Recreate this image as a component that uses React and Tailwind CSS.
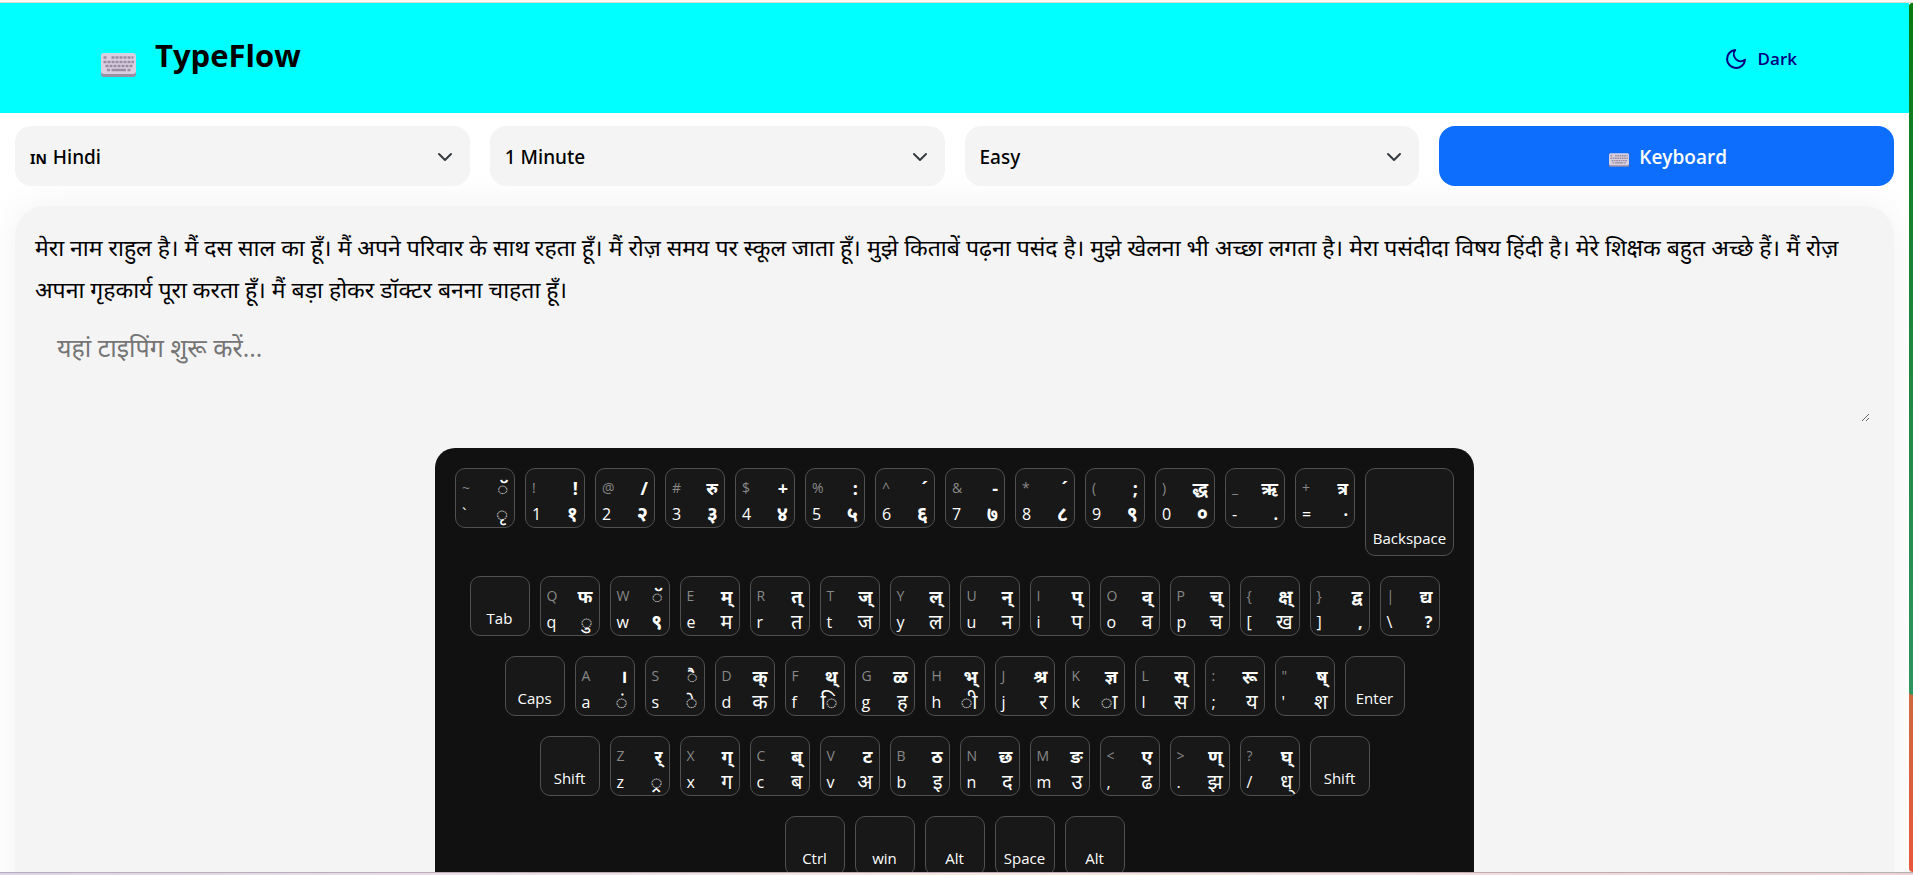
import { useState } from 'react';

const ROWS = [
  [
    ['~', '`', 'ॅ', 'ृ'],
    ['!', '1', '!', '१'],
    ['@', '2', '/', '२'],
    ['#', '3', 'रु', '३'],
    ['$', '4', '+', '४'],
    ['%', '5', ':', '५'],
    ['^', '6', '´', '६'],
    ['&', '7', '-', '७'],
    ['*', '8', '´', '८'],
    ['(', '9', ';', '९'],
    [')', '0', 'द्ध', '०'],
    ['_', '-', 'ऋ', '.'],
    ['+', '=', 'त्र', '·'],
    'Backspace',
  ],
  [
    'Tab',
    ['Q', 'q', 'फ', 'ु'],
    ['W', 'w', 'ॅ', '९'],
    ['E', 'e', 'म्', 'म'],
    ['R', 'r', 'त्', 'त'],
    ['T', 't', 'ज्', 'ज'],
    ['Y', 'y', 'ल्', 'ल'],
    ['U', 'u', 'न्', 'न'],
    ['I', 'i', 'प्', 'प'],
    ['O', 'o', 'व्', 'व'],
    ['P', 'p', 'च्', 'च'],
    ['{', '[', 'क्ष्', 'ख'],
    ['}', ']', 'द्व', ','],
    ['|', '\\', 'द्य', '?'],
  ],
  [
    'Caps',
    ['A', 'a', '।', 'ं'],
    ['S', 's', 'ै', 'े'],
    ['D', 'd', 'क्', 'क'],
    ['F', 'f', 'थ्', 'ि'],
    ['G', 'g', 'ळ', 'ह'],
    ['H', 'h', 'भ्', 'ी'],
    ['J', 'j', 'श्र', 'र'],
    ['K', 'k', 'ज्ञ', 'ा'],
    ['L', 'l', 'स्', 'स'],
    [':', ';', 'रू', 'य'],
    ['"', "'", 'ष्', 'श'],
    'Enter',
  ],
  [
    'Shift',
    ['Z', 'z', 'र्', '्र'],
    ['X', 'x', 'ग्', 'ग'],
    ['C', 'c', 'ब्', 'ब'],
    ['V', 'v', 'ट', 'अ'],
    ['B', 'b', 'ठ', 'इ'],
    ['N', 'n', 'छ', 'द'],
    ['M', 'm', 'ङ', 'उ'],
    ['<', ',', 'ए', 'ढ'],
    ['>', '.', 'ण्', 'झ'],
    ['?', '/', 'घ्', 'ध्'],
    'Shift',
  ],
  ['Ctrl', 'win', 'Alt', 'Space', 'Alt'],
];

const PASSAGE =
  'मेरा नाम राहुल है। मैं दस साल का हूँ। मैं अपने परिवार के साथ रहता हूँ। मैं रोज़ समय पर स्कूल जाता हूँ। मुझे किताबें पढ़ना पसंद है। मुझे खेलना भी अच्छा लगता है। मेरा पसंदीदा विषय हिंदी है। मेरे शिक्षक बहुत अच्छे हैं। मैं रोज़ अपना गृहकार्य पूरा करता हूँ। मैं बड़ा होकर डॉक्टर बनना चाहता हूँ।';

function KeyboardIcon({ className }) {
  return (
    <svg viewBox="0 0 35 24" className={className} aria-hidden="true">
      <rect x="0" y="3" width="35" height="21" rx="3" fill="#998ea4" />
      <rect x="0" y="0" width="35" height="21" rx="3" fill="#d8d0e0" />
      <g stroke="#998ea4" strokeWidth="2.4" fill="none">
        <path d="M2.500 4.500h3M10.500 4.500h22" strokeDasharray="3 1" />
        <path d="M2.500 9h30.500" strokeDasharray="3 1" />
        <path d="M4.500 13h27" strokeDasharray="3 1" />
        <path d="M6 17h3M10.500 17h14.500M26.500 17h3" />
      </g>
    </svg>
  );
}

function Picker({ label, prefix, options }) {
  return (
    <div className="relative flex h-[60px] items-center gap-[6px] rounded-2xl bg-[#f4f4f4] pt-[2px] pl-[15px]">
      {prefix && <span className="pt-1 font-['Noto_Sans',sans-serif] text-sm font-bold">{prefix}</span>}
      <select
        aria-label={label}
        className="h-full min-w-0 flex-1 appearance-none bg-transparent font-['Noto_Sans',sans-serif] text-[19px] font-medium outline-none"
      >
        {options.map((option) => (
          <option key={option}>{option}</option>
        ))}
      </select>
      <svg
        viewBox="0 0 16 16"
        className="pointer-events-none absolute right-[17px] size-4"
        fill="none"
        stroke="#343a40"
        strokeWidth="2"
        strokeLinecap="round"
        strokeLinejoin="round"
      >
        <path d="m2 5 6 6 6-6" />
      </svg>
    </div>
  );
}

function Key({ value }) {
  // Special keys only have one label
  if (typeof value === 'string') {
    const size = value === 'Backspace' ? 'h-[88px] w-[89px]' : 'h-[60px] w-[60px]';
    return (
      <button className={`${size} flex items-end justify-center rounded-[10px] border border-[#505050] bg-[#181818] pb-[6px] text-[15px]`}>
        {value}
      </button>
    );
  }

  const [shift, normal, hindiShift, hindi] = value;
  const bold = /[०-९.,?·]/.test(hindi);
  return (
    <button className="grid h-[60px] w-[60px] grid-cols-2 grid-rows-2 rounded-[10px] border border-[#505050] bg-[#181818] px-[6px] pt-[6px]">
      <span className="text-left text-sm leading-[26px] text-[#888]">{shift}</span>
      <span className="text-right text-lg leading-[26px] font-bold">{hindiShift}</span>
      <span className="text-left text-base leading-[26px]">{normal}</span>
      <span className={`text-right leading-[26px] ${/[.,?·]/.test(hindi) ? 'text-base' : 'text-xl'} ${bold ? 'font-bold' : ''}`}>{hindi}</span>
    </button>
  );
}

export default function App() {
  const [typed, setTyped] = useState('');
  const [showKeyboard, setShowKeyboard] = useState(true);

  return (
    <div className="flex h-screen flex-col overflow-hidden bg-white font-['Open_Sans','Noto_Sans',sans-serif] text-black">
      <div className="h-[3px] shrink-0 border-b border-[#e3d9cf] bg-[#fdf9f4]" />

      <div className="flex min-h-0 flex-1">
        <div className="min-w-0 flex-1 overflow-hidden">
          <header className="flex h-[110px] items-center justify-between bg-[#00ffff] pr-[112px] pl-[101px]">
            <div className="flex items-center gap-[19px]">
              <KeyboardIcon className="mt-[14px] h-6 w-[35px]" />
              <h1 className="pb-[6px] text-[31px] leading-10 font-bold">TypeFlow</h1>
            </div>
            <button className="flex items-center gap-[10px] pt-[2px] text-[17px] font-semibold text-[#000080]">
              <svg viewBox="0 0 24 24" className="size-6" fill="none" stroke="currentColor" strokeWidth="2" strokeLinecap="round" strokeLinejoin="round">
                <path d="M21 12.79A9 9 0 1 1 11.21 3 7 7 0 0 0 21 12.79z" />
              </svg>
              Dark
            </button>
          </header>

          <main className="px-[15px] pt-[13px]">
            <div className="grid grid-cols-4 gap-5">
              <Picker label="Language" prefix="IN" options={['Hindi', 'English']} />
              <Picker label="Duration" options={['1 Minute', '2 Minutes', '5 Minutes']} />
              <Picker label="Difficulty" options={['Easy', 'Medium', 'Hard']} />
              <button
                className="flex h-[60px] items-center justify-center gap-[10px] rounded-2xl bg-[#0d6efd] pt-[2px] pl-[3px] text-[19px] font-semibold text-white"
                onClick={() => setShowKeyboard(!showKeyboard)}
              >
                <KeyboardIcon className="mt-[5px] h-[14px] w-5" />
                Keyboard
              </button>
            </div>

            {/* Typing area */}
            <section className="mt-5 rounded-[30px] bg-[#f4f4f4] px-5 pt-5 pb-10 shadow-[0_0_40px_rgba(0,0,0,0.06)]">
              <p className="text-[23px] leading-[42px]">{PASSAGE}</p>
              <div className="px-1">
                <textarea
                  aria-label="Typing area"
                  placeholder="यहां टाइपिंग शुरू करें..."
                  className="block h-28 w-full resize-y bg-transparent px-[18px] pt-[17px] text-[25px] leading-10 outline-none placeholder:text-[#757575]"
                  value={typed}
                  onChange={(e) => setTyped(e.target.value)}
                />
              </div>

              {showKeyboard && (
                <div className="mx-auto mt-[26px] flex w-fit flex-col gap-5 rounded-[20px] bg-[#111] p-5 text-white">
                  {ROWS.map((row, i) => (
                    <div key={i} className="flex items-start justify-center gap-[10px]">
                      {row.map((value, j) => (
                        <Key key={j} value={value} />
                      ))}
                    </div>
                  ))}
                </div>
              )}
            </section>
          </main>
        </div>

        {/* Scroll progress */}
        <div className="flex w-1 shrink-0 flex-col overflow-hidden rounded-l bg-linear-to-b from-[#3c8c50] to-[#e8553a]">
          <div className="h-[692px] rounded-bl bg-linear-to-b from-[#067a0c] to-[#2e9460]" />
        </div>
      </div>

      <div className="h-[3px] shrink-0 border-t border-[#b8aeb8] bg-linear-to-r from-[#dcd4ec] via-[#fbe6e0] to-[#ecd2d4]" />
    </div>
  );
}
